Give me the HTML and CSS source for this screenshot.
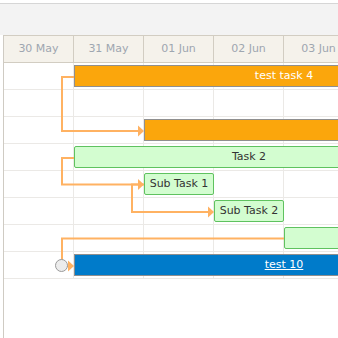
FILE: index.html
```
<!DOCTYPE html>
<html lang="en">
<head>
  <meta charset="UTF-8">
  <meta name="viewport" content="width=device-width, initial-scale=1.0">
  <title>Gantt Links</title>
  <link rel="stylesheet" href="styles.css">
</head>
<body>
  <div class="toolbar"></div>

  <div class="gantt">
    <div class="scale">
      <div class="scale-cell">30 May</div>
      <div class="scale-cell">31 May</div>
      <div class="scale-cell">01 Jun</div>
      <div class="scale-cell">02 Jun</div>
      <div class="scale-cell">03 Jun</div>
    </div>

    <div class="rows">
      <div class="row"><div class="bar bar-orange" style="left:70px;width:420px">test task 4</div></div>
      <div class="row"></div>
      <div class="row"><div class="bar bar-orange" style="left:140px;width:420px"></div></div>
      <div class="row"><div class="bar bar-green" style="left:70px;width:350px">Task 2</div></div>
      <div class="row"><div class="bar bar-green" style="left:140px;width:70px">Sub Task 1</div></div>
      <div class="row"><div class="bar bar-green" style="left:210px;width:70px">Sub Task 2</div></div>
      <div class="row"><div class="bar bar-green" style="left:280px;width:210px"></div></div>
      <div class="row"><div class="bar bar-blue" style="left:70px;width:420px"><a href="#">test 10</a></div></div>

      <!-- dependency links, drawn in page coordinates -->
      <svg class="links" width="334" height="216" viewBox="4 63 334 216">
        <g fill="none" stroke="#ffb262" stroke-width="2">
          <path d="M74 77 H62 V131 H139"/>
          <path d="M74 158 H62 V184.5 H139"/>
          <path d="M144 184.5 H132 V212 H209"/>
          <path d="M284 238.5 H62 V266 H69"/>
        </g>
        <g fill="#ffb262">
          <polygon points="138,125.5 144,131 138,136.5"/>
          <polygon points="138,179 144,184.5 138,190"/>
          <polygon points="208,206.5 214,212 208,217.5"/>
          <polygon points="68,260.5 74,266 68,271.5"/>
        </g>
        <circle cx="61.5" cy="265.5" r="6" fill="#ececec" stroke="#9a9a9a" stroke-width="1"/>
      </svg>
    </div>
  </div>
</body>
</html>
```

FILE: styles.css
```
body {
  margin: 0;
  font-family: "DejaVu Sans", Verdana, sans-serif;
  font-size: 11px;
  background-color: #fff;
  overflow: hidden;
}
.toolbar {
  margin-top: 3px;
  height: 32px;
  box-sizing: border-box;
  border-top: 1px solid #d6d6d6;
  background-color: #f3f3f3;
}
.gantt {
  margin-left: 3px;
  height: 303px;
  border-left: 1px solid #cfcbc3;
  overflow: hidden;
}
.scale {
  display: flex;
  height: 28px;
  box-sizing: border-box;
  border-top: 1px solid #d2cdc2;
  border-bottom: 1px solid #d2cdc2;
  background-color: #f5f2eb;
}
.scale-cell {
  flex: 0 0 70px;
  box-sizing: border-box;
  border-right: 1px solid #d2cdc2;
  line-height: 26px;
  text-align: center;
  color: #9ea6b0;
}
.rows {
  position: relative;
}
.row {
  position: relative;
  height: 27px;
  box-sizing: border-box;
  border-bottom: 1px solid #ebe9e6;
  background: repeating-linear-gradient(to right, transparent 0 69px, #ebe9e6 69px 70px);
}
.bar {
  position: absolute;
  top: 2px;
  height: 22px;
  box-sizing: border-box;
  border: 1px solid #8f8f8f;
  line-height: 20px;
  text-align: center;
  white-space: nowrap;
  color: #fff;
}
.bar-orange {
  background-color: #fba60c;
}
.bar-blue {
  background-color: #007bca;
}
.bar-blue a {
  color: #fff;
}
.bar-green {
  background-color: #d3fdd0;
  border-color: #5fc25f;
  border-radius: 2px;
  color: #333;
}
.links {
  position: absolute;
  top: 0;
  left: 0;
  overflow: visible;
}
```
